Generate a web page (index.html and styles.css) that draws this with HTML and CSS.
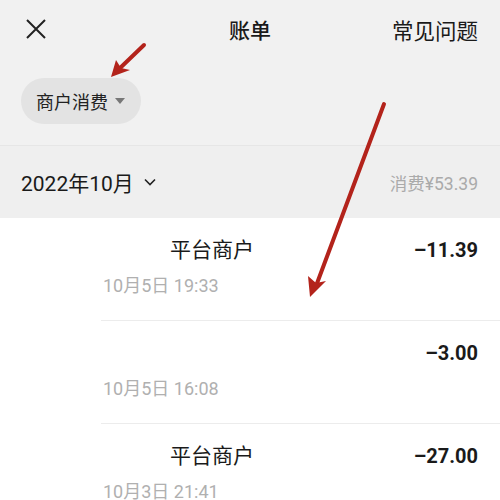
FILE: index.html
```html
<!DOCTYPE html>
<html lang="zh">
<head>
  <meta charset="UTF-8">
  <title>账单</title>
  <link rel="stylesheet" href="styles.css">
</head>
<body>

  <div class="page">
    <!-- Top bar -->
    <div class="topbar">
      <svg class="close" width="22" height="22" viewBox="0 0 22 22">
        <path d="M2 2 L20 20 M20 2 L2 20" stroke="#222" stroke-width="2" fill="none"/>
      </svg>
      <div class="title">账单</div>
      <div class="faq">常见问题</div>
    </div>

    <div class="filters">
      <div class="pill">商户消费 <span class="tri"></span></div>
    </div>

    <div class="month">
      <div class="month-name">2022年10月
        <svg width="14" height="10" viewBox="0 0 14 10">
          <path d="M2 2.5 L7 7.5 L12 2.5" stroke="#222" stroke-width="1.6" fill="none"/>
        </svg>
      </div>
      <div class="month-sum">消费¥53.39</div>
    </div>

    <div class="list">
      <div class="row">
        <div class="line">
          <span class="name">平台商户</span>
          <span class="amount">–11.39</span>
        </div>
        <div class="date">10月5日 19:33</div>
      </div>
      <div class="row">
        <div class="line">
          <span class="name"></span>
          <span class="amount">–3.00</span>
        </div>
        <div class="date">10月5日 16:08</div>
      </div>
      <div class="row">
        <div class="line">
          <span class="name">平台商户</span>
          <span class="amount">–27.00</span>
        </div>
        <div class="date">10月3日 21:41</div>
      </div>
    </div>

    <!-- annotation arrows -->
    <svg class="marks" width="500" height="500" viewBox="0 0 500 500">
      <g stroke="#b3231b" stroke-width="4" stroke-linecap="round" fill="none">
        <path d="M144 45 L118 70"/>
        <path d="M384 104 L316 286"/>
      </g>
      <g fill="#b3231b">
        <path d="M111 77 L116 60 L121 68 L130 70 Z"/>
        <path d="M310 297 L308 276 L316 283 L326 281 Z"/>
      </g>
    </svg>
  </div>

</body>
</html>
```

FILE: styles.css
```css
body {
  margin: 0;
  padding: 0;
  font-family: Roboto, "Noto Sans CJK SC", sans-serif;
  background: #fff;
  color: #1a1a1a;
}

.page {
  position: relative;
  width: 500px;
  height: 500px;
  overflow: hidden;
}

.topbar {
  display: flex;
  align-items: center;
  justify-content: space-between;
  height: 58px;
  padding: 0 22px 0 25px;
  background: #f1f1f1;
  position: relative;
}

.close {
  display: block;
}

.title {
  position: absolute;
  left: 0;
  right: 0;
  text-align: center;
  font-size: 21px;
  font-weight: 500;
  pointer-events: none;
}

.faq {
  font-size: 21.5px;
}

.filters {
  background: #f1f1f1;
  padding: 20px 21px 21px;
  border-bottom: 1px solid #e6e6e6;
}

.pill {
  display: inline-flex;
  align-items: center;
  gap: 7px;
  height: 46px;
  padding: 0 16px 0 15px;
  border-radius: 23px;
  background: #e3e3e3;
  font-size: 18px;
  color: #222;
}

.tri {
  width: 0;
  height: 0;
  border-left: 5px solid transparent;
  border-right: 5px solid transparent;
  border-top: 6px solid #777;
}

.month {
  display: flex;
  align-items: center;
  justify-content: space-between;
  height: 72px;
  padding: 0 22px 0 21px;
  background: #efefef;
}

.month-name {
  display: flex;
  align-items: center;
  gap: 9px;
  font-size: 21px;
  color: #1a1a1a;
}

.month-sum {
  font-size: 17.5px;
  color: #aaa;
}

.row {
  margin-left: 101px;
  height: 103px;
  box-sizing: border-box;
  padding: 18px 22px 0 2px;
  border-bottom: 1px solid #ececec;
}

.line {
  display: flex;
  justify-content: space-between;
  line-height: 28px;
  height: 28px;
}

.name {
  margin-left: 67px;
  font-size: 21px;
}

.amount {
  font-size: 20px;
  font-weight: 700;
}

.date {
  margin-top: 10px;
  line-height: 24px;
  font-size: 18px;
  color: #b0b0b0;
}

.marks {
  position: absolute;
  left: 0;
  top: 0;
  pointer-events: none;
}
```
